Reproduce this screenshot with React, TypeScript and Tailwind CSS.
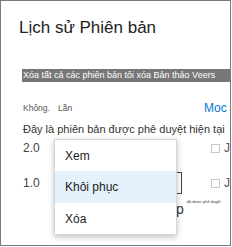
import React from 'react';

function Checkbox() {
  return <span className="block h-[9px] w-[9px] shrink-0 border border-[#c8c8c8] bg-white" />;
}

export default function App() {
  return (
    <div
      className="relative h-[246px] w-[231px] overflow-hidden border border-[#7a7a7a] bg-white text-[#333]"
      style={{ fontFamily: '"Liberation Sans", Arial, sans-serif' }}
    >
      {/* Title */}
      <div className="pl-[18px] pt-[17px] text-[17px] leading-5 text-[#222]">Lịch sử Phiên bản</div>

      {/* Selected bar */}
      <div className="ml-[21px] mt-[31px] h-[13px] overflow-hidden whitespace-nowrap bg-[#777777] pl-[1px] text-[9px] leading-[13px] text-white">
        Xóa tất cả các phiên bản tôi xóa Bản thảo Veers
      </div>

      {/* Column header */}
      <div className="mt-[19px] flex h-[14px] items-center whitespace-nowrap pl-[22px]">
        <span className="text-[8.5px] text-[#555]">Không.</span>
        <span className="ml-[8px] text-[8.5px] text-[#555]">Lần</span>
        <span className="ml-auto w-[26px] overflow-hidden text-[12px] text-[#0078d4]">Moc</span>
      </div>

      {/* Current version */}
      <div className="mt-[7px] h-[15px] whitespace-nowrap pl-[22px] text-[11px] leading-[15px] text-[#333]">
        Đây là phiên bản được phê duyệt hiện tại
      </div>

      {/* Version 2.0 */}
      <div className="mt-[1px] flex h-[20px] items-center whitespace-nowrap pl-[22px]">
        <span className="text-[12px] text-[#444]">2.0</span>
        <span className="ml-auto flex items-center gap-[4px]">
          <Checkbox />
          <span className="w-[6px] overflow-hidden text-[12px] text-[#555]">Ja</span>
        </span>
      </div>

      {/* Version 1.0 */}
      <div className="mt-[14px] flex h-[22px] items-center whitespace-nowrap pl-[22px]">
        <span className="text-[12px] text-[#444]">1.0</span>
        <span className="ml-[120px] flex h-[22px] w-[22px] items-center justify-end border border-l-0 border-[#444] pr-[4px] text-[7px] text-[#222]">
          ▾
        </span>
        <span className="ml-auto flex items-center gap-[4px]">
          <Checkbox />
          <span className="w-[6px] overflow-hidden text-[12px] text-[#555]">Ja</span>
        </span>
      </div>

      {/* Approved note */}
      <div className="mt-[8px] flex items-start whitespace-nowrap pl-[175px]">
        <span className="text-[14px] leading-[14px] text-[#333]">p</span>
        <span className="ml-[3px] mt-[-3px] text-[4px] leading-[6px] text-[#333]">đã được phê duyệt</span>
      </div>

      {/* Context menu */}
      <div className="absolute left-[53px] top-[138px] w-[123px] border border-[#d6d6d6] bg-white shadow-[0_2px_6px_rgba(0,0,0,0.25)]">
        <div className="flex h-[31px] items-center pl-[10px] text-[12px] text-[#222]">Xem</div>
        <div className="flex h-[32px] items-center bg-[#e5f1fb] pl-[10px] text-[12px] text-[#222]">Khôi phục</div>
        <div className="flex h-[31px] items-center pl-[10px] text-[12px] text-[#222]">Xóa</div>
      </div>
    </div>
  );
}
